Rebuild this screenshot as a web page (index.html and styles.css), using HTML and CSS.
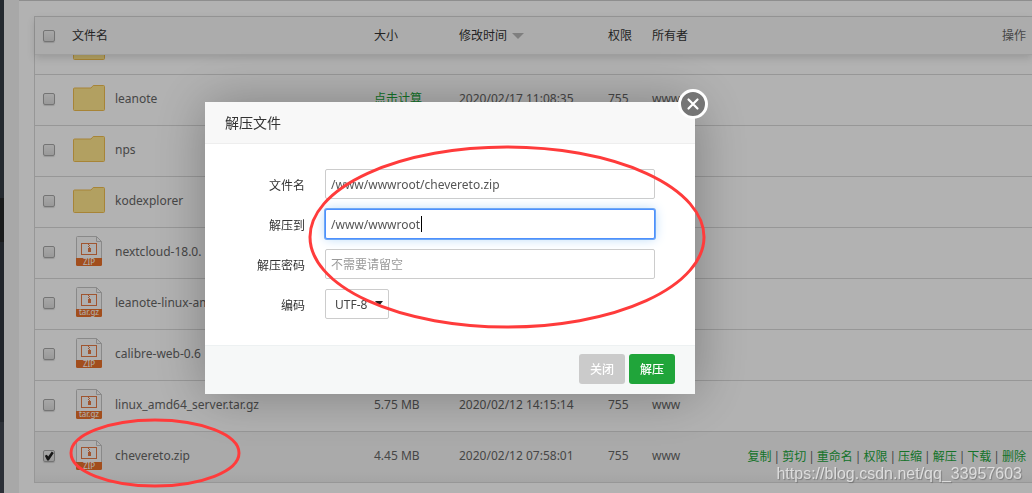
FILE: index.html
```html
<!DOCTYPE html>
<html lang="zh-CN">
<head>
<meta charset="utf-8">
<title>文件管理</title>
<link rel="stylesheet" href="styles.css">
</head>
<body>
<svg class="sprite" aria-hidden="true">
  <symbol id="folder" viewBox="0 0 32 26">
    <path d="M.5 24.5V4Q.5 3 1.5 3H18l2.200-2.500H30.500Q31.500.5 31.500 1.500V24.500Q31.500 25.500 30.500 25.500H1.500Q.5 25.500.5 24.500Z" fill="#ffe68c" stroke="#f0be50"/>
  </symbol>
  <symbol id="archive" viewBox="0 0 26 30">
    <path d="M.5 22V1.500Q.5.5 1.500.5H20.500L25.500 5.500V22" fill="#fbfbfb" stroke="#c4c4c4"/>
    <path d="M20.500.5V5.500H25.500" fill="none" stroke="#c4c4c4"/>
    <rect x="5.500" y="7.500" width="15" height="11" fill="none" stroke="#e67a46"/>
    <path d="M12 8v1h1v1h-1v1h1v1h-1v4h3v-4h-1v-1h-1v-1h1v-1h-1V8z" fill="#e67a46"/>
    <path d="M0 22H26V28.500Q26 30 24.500 30H1.500Q0 30 0 28.500Z" fill="#e8702a"/>
  </symbol>
</svg>

<div class="app">
  <nav class="sidebar" aria-label="侧栏"><span class="side-top"></span><span class="side-active"></span><span class="side-mid"></span></nav>
  <main class="panel">
    <div class="files">
      <table class="grid head">
        <colgroup><col class="c-check"><col class="c-name"><col class="c-size"><col class="c-time"><col class="c-perm"><col class="c-owner"><col></colgroup>
        <thead><tr>
          <th><input type="checkbox" aria-label="全选"></th><th>文件名</th><th>大小</th><th>修改时间<i class="sort"></i></th><th>权限</th><th>所有者</th><th class="ops muted">操作</th>
        </tr></thead>
      </table>
      <div class="scroll">
        <table class="grid body">
          <colgroup><col class="c-check"><col class="c-name"><col class="c-size"><col class="c-time"><col class="c-perm"><col class="c-owner"><col></colgroup>
          <tbody>
            <tr><td></td><td><div class="file"><svg class="folder"><use href="#folder"/></svg></div></td><td></td><td></td><td></td><td></td><td></td></tr>
            <tr><td><input type="checkbox" aria-label="leanote"></td><td><div class="file"><svg class="folder"><use href="#folder"/></svg>leanote</div></td><td><a href="#size">点击计算</a></td><td>2020/02/17 11:08:35</td><td>755</td><td>www</td><td></td></tr>
            <tr><td><input type="checkbox" aria-label="nps"></td><td><div class="file"><svg class="folder"><use href="#folder"/></svg>nps</div></td><td></td><td></td><td></td><td></td><td></td></tr>
            <tr><td><input type="checkbox" aria-label="kodexplorer"></td><td><div class="file"><svg class="folder"><use href="#folder"/></svg>kodexplorer</div></td><td></td><td></td><td></td><td></td><td></td></tr>
            <tr><td><input type="checkbox" aria-label="nextcloud"></td><td><div class="file"><svg class="archive" viewBox="0 0 26 30"><use href="#archive"/><text x="13" y="29">ZIP</text></svg>nextcloud-18.0.</div></td><td></td><td></td><td></td><td></td><td></td></tr>
            <tr><td><input type="checkbox" aria-label="leanote-linux"></td><td><div class="file"><svg class="archive" viewBox="0 0 26 30"><use href="#archive"/><text x="13" y="28">tar.gz</text></svg>leanote-linux-am</div></td><td></td><td></td><td></td><td></td><td></td></tr>
            <tr><td><input type="checkbox" aria-label="calibre-web"></td><td><div class="file"><svg class="archive" viewBox="0 0 26 30"><use href="#archive"/><text x="13" y="29">ZIP</text></svg>calibre-web-0.6</div></td><td></td><td></td><td></td><td></td><td></td></tr>
            <tr><td><input type="checkbox" aria-label="linux_amd64_server.tar.gz"></td><td><div class="file"><svg class="archive" viewBox="0 0 26 30"><use href="#archive"/><text x="13" y="28">tar.gz</text></svg>linux_amd64_server.tar.gz</div></td><td>5.75 MB</td><td>2020/02/12 14:15:14</td><td>755</td><td>www</td><td></td></tr>
            <tr class="selected"><td><input type="checkbox" checked aria-label="chevereto.zip"></td><td><div class="file"><svg class="archive" viewBox="0 0 26 30"><use href="#archive"/><text x="13" y="29">ZIP</text></svg>chevereto.zip</div></td><td>4.45 MB</td><td>2020/02/12 07:58:01</td><td>755</td><td>www</td><td class="ops"><div class="links"><a href="#copy">复制</a>|<a href="#cut">剪切</a>|<a href="#rename">重命名</a>|<a href="#perm">权限</a>|<a href="#zip">压缩</a>|<a href="#unzip">解压</a>|<a href="#down">下载</a>|<a href="#del">删除</a></div></td></tr>
          </tbody>
        </table>
      </div>
    </div>
  </main>
</div>

<div class="shade"></div>

<form class="dialog" role="dialog" aria-labelledby="dlg-title">
  <h1 class="dialog-title" id="dlg-title">解压文件</h1>
  <button class="dialog-x" type="button" aria-label="关闭窗口"><svg viewBox="0 0 30 30"><circle cx="15" cy="15" r="13.500" fill="#757575" stroke="#fff" stroke-width="3"/><path d="M10.500 10.500l9 9M19.500 10.500l-9 9" stroke="#fff" stroke-width="2.200" stroke-linecap="round"/></svg></button>
  <div class="fields">
    <label for="f-name">文件名</label>
    <div class="field"><input id="f-name" type="text" value="/www/wwwroot/chevereto.zip"></div>
    <label for="f-dest">解压到</label>
    <div class="field"><input class="active" id="f-dest" type="text" value="/www/wwwroot"><i class="caret"></i></div>
    <label for="f-pass">解压密码</label>
    <div class="field"><input id="f-pass" type="text" placeholder="不需要请留空"></div>
    <label for="f-code">编码</label>
    <div class="field pick"><select id="f-code"><option>UTF-8</option></select></div>
  </div>
  <div class="actions"><button class="btn" type="button">关闭</button><button class="btn go" type="button">解压</button></div>
</form>

<svg class="marks" aria-hidden="true">
  <ellipse cx="507" cy="237" rx="197" ry="90"/>
  <ellipse cx="155" cy="453" rx="84" ry="33"/>
</svg>
<div class="watermark">https://blog.csdn.net/qq_33957603</div>
</body>
</html>
```
FILE: styles.css
```css
* { box-sizing: border-box; }
body {
  margin: 0;
  color: #666;
  background: #fff;
  font: 12px/18px "Noto Sans", "Noto Sans CJK SC", sans-serif;
}
input, select, button { font: inherit; }
a { color: #20a53a; text-decoration: none; }
.sprite { display: none; }

.app { display: flex; min-height: 100vh; background: #f1f1f1; overflow: hidden; }
.sidebar { display: flex; flex-direction: column; width: 4px; background: #40464f; }
.side-top { height: 198px; background: #343b44; }
.side-active { height: 44px; background: #242628; }
.side-mid { height: 180px; background: #30363e; }
.panel {
  flex: 1;
  min-width: 0;
  margin-left: 15px;
  padding: 15px 0 10px 15px;
  border-top: 1px solid #ccc;
  background: #fff;
}
.files { border: 1px solid #d9d9d9; border-right: 0; border-bottom: 0; }

.grid { width: 100%; table-layout: fixed; border-collapse: separate; border-spacing: 0; }
.c-check { width: 29px; }
.c-name { width: 302px; }
.c-size { width: 85px; }
.c-time { width: 149px; }
.c-perm { width: 44px; }
.c-owner { width: 76px; }
.grid th, .grid td { padding: 0 0 0 8px; text-align: left; white-space: nowrap; vertical-align: middle; }
.grid th { height: 37px; color: #333; font-weight: 400; }
.grid td { height: 51px; padding-bottom: 2px; border-bottom: 1px solid #d9d9d9; }
.grid .ops { padding: 0 6px 0 0; text-align: right; }
.links { display: flex; justify-content: flex-end; gap: 2px; }
.grid .muted { color: #666; }
.head { position: relative; background: #f7f7f7; border-bottom: 1px solid #e4e4e4; box-shadow: 0 3px 8px rgba(0, 0, 0, .15); }
.scroll { overflow: hidden; }
.body { margin-top: -31px; }
.selected td { background: linear-gradient(#f4f4f4 80%, #ececec); }
.sort {
  display: inline-block;
  margin-left: 5px;
  border: 6px solid transparent;
  border-top-color: #b7b7b7;
  border-bottom: 0;
  vertical-align: middle;
}
.grid input {
  display: block;
  appearance: none;
  width: 12px;
  height: 12px;
  margin: 0;
  border: 1px solid #a6a6a6;
  border-radius: 2px;
  background: linear-gradient(#f0f0f0, #dcdcdc);
  box-shadow: 0 1px 1px rgba(0, 0, 0, .15);
}
.grid input:checked::after {
  content: "";
  display: block;
  width: 10px;
  height: 10px;
  background: #222;
  clip-path: polygon(8% 48%, 28% 38%, 42% 56%, 78% 6%, 98% 20%, 48% 96%, 32% 96%);
}
.file { display: flex; align-items: center; gap: 10px; padding-left: 1px; }
.folder { width: 32px; height: 26px; margin-bottom: 2px; }
.archive { width: 26px; height: 30px; margin: 0 3px 2px; overflow: visible; }
.archive text { fill: #fff; font: 8px "Noto Sans", sans-serif; text-anchor: middle; }

.shade { position: fixed; inset: 0; background: rgba(0, 0, 0, .3); }
.dialog {
  position: fixed;
  top: 102px;
  left: 205px;
  width: 490px;
  background: #fff;
  color: #333;
  box-shadow: 1px 1px 50px rgba(0, 0, 0, .3);
}
.dialog-title {
  margin: 0;
  padding: 0 20px;
  border-bottom: 1px solid #eee;
  background: #f8f8f8;
  font-size: 14px;
  font-weight: 400;
  line-height: 41px;
}
.dialog-x { position: absolute; top: -13px; right: -13px; width: 30px; height: 30px; padding: 0; border: 0; background: none; }
.dialog-x svg { display: block; }
.fields {
  display: grid;
  grid-template-columns: 100px 330px;
  gap: 10px 20px;
  padding: 25px 0 26px;
  line-height: 30px;
}
.fields label { padding-top: 2px; height: 30px; text-align: right; }
.field { position: relative; height: 30px; }
.field input, .field select {
  display: block;
  width: 100%;
  height: 30px;
  padding: 2px 5px 0;
  border: 1px solid #ccc;
  border-radius: 2px;
  background: #fff;
  color: #555;
  outline: 0;
}
.field input::placeholder { color: #999; }
.field .active { border: 1px solid #4d90fe; box-shadow: 0 0 0 1px #6ea8f5, 0 0 12px #b5d8f8; }
.caret { position: absolute; top: 7px; left: 96px; width: 1px; height: 16px; background: #000; }
.pick { width: 64px; }
.field select { padding: 0 9px; appearance: none; color: #444; }
.pick::after {
  content: "";
  position: absolute;
  top: 12px;
  right: 6px;
  border: 4px solid transparent;
  border-top: 5px solid #222;
  border-bottom: 0;
}
.actions {
  display: flex;
  justify-content: flex-end;
  gap: 4px;
  padding: 8px 20px 10px;
  border-top: 1px solid #edf1f2;
  background: #f6f8f8;
}
.btn { height: 30px; padding: 2px 11px 0; border: 0; border-radius: 3px; background: #cbcbcb; color: #fff; font-weight: 500; }
.go { background: #20a53a; }

.marks { position: fixed; inset: 0; width: 100%; height: 100%; pointer-events: none; fill: none; stroke: #ff3b3b; stroke-width: 3; }
.watermark {
  position: fixed;
  right: 10px;
  bottom: 10px;
  color: rgba(255, 255, 255, .65);
  font: 16px/18px "Liberation Sans", sans-serif;
  text-shadow: 1px 1px 1px rgba(0, 0, 0, .25);
}
```
